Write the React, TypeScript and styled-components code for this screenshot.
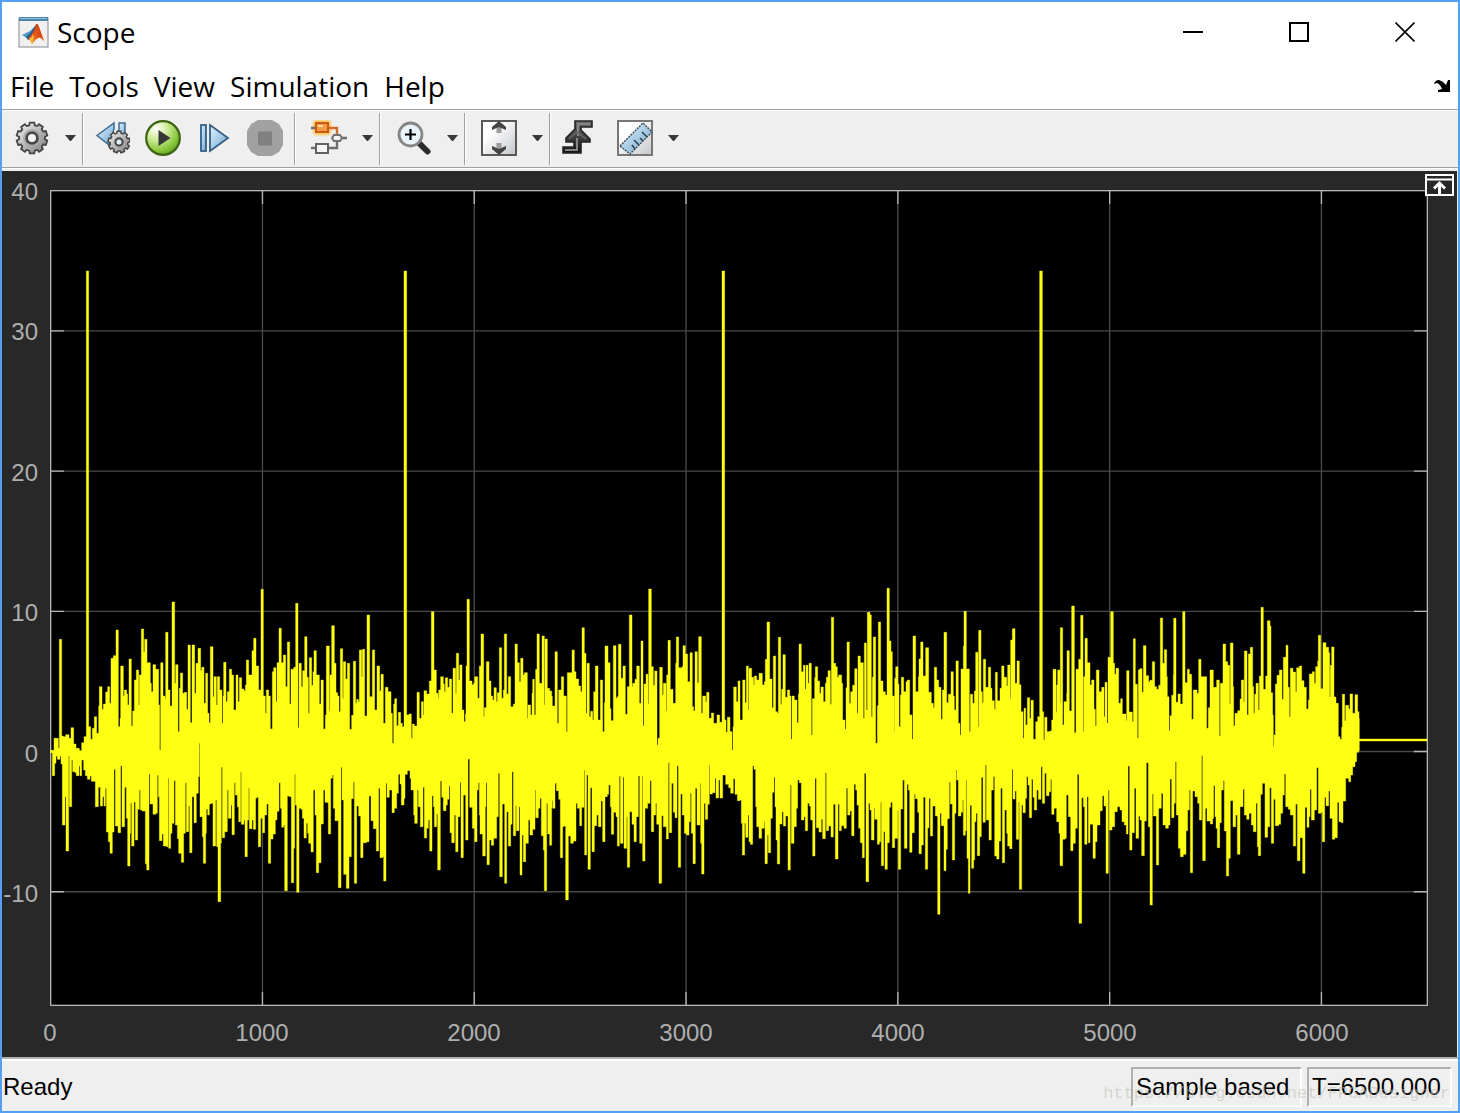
import React from "react";
import styled, { createGlobalStyle } from "styled-components";

const GlobalStyle = createGlobalStyle`
  html, body, #root { height: 100%; }
  body { margin: 0; background: #ffffff; }
  *, *::before, *::after { box-sizing: border-box; }
  button { border: 0; margin: 0; padding: 0; background: transparent; font: inherit; color: inherit; }
`;

const uiFont = `"Open Sans", "Noto Sans", sans-serif`;
const plainFont = `"Liberation Sans", Arial, sans-serif`;

/* ---------- window chrome ---------- */

const Window = styled.div`
  display: flex;
  flex-direction: column;
  min-height: 100%;
  border: 2px solid #53a0f6;
  background: #ffffff;
  color: #000000;
`;

const TitleBar = styled.header`
  display: flex;
  align-items: center;
  height: 60px;
  padding-left: 16px;
  font: 28px/40px ${uiFont};
`;

const Title = styled.h1`
  flex: 1;
  margin: 0 0 0 8px;
  font: inherit;
`;

const WindowButton = styled.button`
  display: flex;
  align-items: center;
  justify-content: center;
  width: 106px;
  height: 60px;
`;

const MenuBar = styled.nav`
  display: flex;
  align-items: center;
  gap: 15px;
  height: 47px;
  padding: 0 8px;
  font: 28px/40px ${uiFont};
`;

const MenuItem = styled.button`
  height: 44px;
`;

const DockButton = styled.button`
  display: flex;
  margin-left: auto;
`;

/* ---------- toolbar ---------- */

const ToolBar = styled.div`
  display: flex;
  height: 59px;
  padding: 3px 0 2px;
  border-top: 1px solid #a0a0a0;
  border-bottom: 1px solid #a0a0a0;
  background: #efefef;
  box-shadow: inset 0 1px 0 #ffffff;
`;

const ToolGroup = styled.div<{ $last?: boolean }>`
  display: flex;
  align-items: center;
  padding: 0 6px 2px 0;
  border-right: ${(p) => (p.$last ? "0" : "1px solid #a0a0a0")};
  box-shadow: ${(p) => (p.$last ? "none" : "1px 0 0 #ffffff")};
  margin-right: 1px;
`;

const ToolButton = styled.button`
  display: flex;
  padding: 0 5px 0 10px;
`;

const SplitButton = styled.div<{ $lead?: boolean }>`
  display: flex;
  align-items: center;
  padding-left: ${(p) => (p.$lead ? 12 : 15)}px;
`;

const PlainButton = styled.button`
  display: flex;
`;

const ArrowButton = styled.button`
  display: flex;
  align-items: center;
  height: 36px;
  padding-left: 15px;
`;

/* ---------- plot ---------- */

const PlotPanel = styled.main`
  position: relative;
  flex: 1;
  display: grid;
  grid-template-columns: 48px 1fr;
  grid-template-rows: 1fr 51px;
  min-height: 400px;
  margin: 3px 1px 0 0;
  padding: 19px 29px 0 0;
  background: #282828;
  box-shadow: 0 -2px 0 #efefef, 1px 0 0 #efefef;
  color: #afafaf;
  font: 24px/28px ${plainFont};
`;

const YAxis = styled.div`
  display: grid;
  grid-template-rows: repeat(5, 100fr) 81fr;
  justify-items: end;
  padding-right: 12px;
`;

const YLabel = styled.span`
  height: 28px;
  margin-top: -12px;
`;

const PlotArea = styled.svg`
  display: block;
  width: 100%;
  height: 100%;
  min-height: 0;
  background: #000000;
`;

const XAxis = styled.div`
  grid-column: 2;
  display: grid;
  grid-template-columns: repeat(6, 2fr) 1fr;
  align-items: center;
  padding-top: 2px;
`;

const XLabel = styled.span`
  display: flex;
  justify-content: center;
  width: 0;
`;

const MaximizeAxes = styled.button`
  position: absolute;
  top: 3px;
  right: 3px;
  display: flex;
`;

/* ---------- status bar ---------- */

const StatusBar = styled.footer`
  position: relative;
  display: flex;
  align-items: center;
  gap: 5px;
  height: 54px;
  padding: 6px 6px 2px 1px;
  border-top: 2px solid #b0b0b0;
  background: #efefef;
  box-shadow: inset 0 2px 0 #ffffff;
  font: 24px/28px ${plainFont};
`;

const StatusText = styled.span`
  flex: 1;
`;

const StatusField = styled.span<{ $width: number }>`
  width: ${(p) => p.$width}px;
  height: 40px;
  padding: 4px 0 0 3px;
  border: 2px solid;
  border-color: #b0b0b0 #ffffff #ffffff #b0b0b0;
  white-space: nowrap;
`;

const Watermark = styled.span`
  position: absolute;
  right: 8px;
  bottom: 5px;
  color: rgba(190, 190, 180, 0.55);
  font: 17px/24px "Liberation Mono", monospace;
  pointer-events: none;
`;

/* ---------- icons ---------- */

function gearPath(cx: number, cy: number, outer: number, inner: number, teeth: number) {
  const step = (Math.PI * 2) / teeth;
  const at = (r: number, a: number) =>
    `${(cx + r * Math.cos(a)).toFixed(2)} ${(cy + r * Math.sin(a)).toFixed(2)}`;
  let d = "";
  for (let i = 0; i < teeth; i++) {
    const a = i * step - Math.PI / 2;
    d += `${i ? "L" : "M"}${at(inner, a - step * 0.34)}L${at(outer, a - step * 0.24)}L${at(outer, a + step * 0.24)}L${at(inner, a + step * 0.34)}`;
  }
  return d + "Z";
}

const IconDefs = () => (
  <svg width="0" height="0" aria-hidden="true" style={{ position: "absolute" }}>
    <defs>
      <linearGradient id="steel" x1="0" y1="0" x2="1" y2="1">
        <stop offset="0" stopColor="#f4f4f4" />
        <stop offset="1" stopColor="#7c7c7c" />
      </linearGradient>
      <linearGradient id="sky" x1="0" y1="0" x2="1" y2="1">
        <stop offset="0" stopColor="#e2f2fb" />
        <stop offset="1" stopColor="#6fa9d2" />
      </linearGradient>
      <radialGradient id="leaf" cx="0.3" cy="0.22" r="0.85">
        <stop offset="0" stopColor="#ffffff" />
        <stop offset="0.4" stopColor="#cdeb94" />
        <stop offset="0.8" stopColor="#84c437" />
        <stop offset="1" stopColor="#5f9c22" />
      </radialGradient>
      <linearGradient id="paper" x1="0" y1="0" x2="1" y2="1">
        <stop offset="0.3" stopColor="#ffffff" />
        <stop offset="1" stopColor="#c2c5ca" />
      </linearGradient>
      <linearGradient id="coal" x1="0" y1="0" x2="0" y2="1">
        <stop offset="0" stopColor="#6e6e6e" />
        <stop offset="1" stopColor="#111111" />
      </linearGradient>
      <linearGradient id="flame" x1="0" y1="0" x2="1" y2="1">
        <stop offset="0" stopColor="#7a1f1c" />
        <stop offset="0.45" stopColor="#e2571b" />
        <stop offset="1" stopColor="#f7b42e" />
      </linearGradient>
      <filter id="glow" x="-40%" y="-40%" width="180%" height="180%">
        <feGaussianBlur stdDeviation="1" />
      </filter>
    </defs>
  </svg>
);

const Icon = ({ children }: { children: React.ReactNode }) => (
  <svg width="36" height="36" viewBox="0 0 36 36" aria-hidden="true">
    {children}
  </svg>
);

const LogoIcon = () => (
  <svg width="31" height="31" viewBox="0 0 31 31" aria-hidden="true">
    <rect x="1" y="1" width="29" height="29" fill="#f0f0f1" stroke="#85888c" />
    <rect x="1" y="0" width="29" height="4" fill="#4d86ad" />
    <rect x="2" y="1" width="27" height="1" fill="#8fc0dd" />
    <path d="M4 18 12 14 18 8 14 20 10 22Z" fill="#4b9ac6" />
    <path d="M8 20 13 15 18 8 14 21 10 23Z" fill="#285a86" />
    <path d="M10 22Q15 17 18 7Q20 6 21 10L26 24Q23 20 20 21Q18 22 14 27Q12 22 10 22Z" fill="url(#flame)" />
    <path d="M19 8Q20 14 18 22L21 20Q24 21 26 24L21 10Q20 7 19 8Z" fill="#dc4a17" />
    <path d="M11 22Q14 20 15 17Q17 22 14 27Q12 23 11 22Z" fill="#f5b636" />
  </svg>
);

const GearIcon = () => (
  <Icon>
    <path d={gearPath(18, 18, 15.5, 13, 10)} fill="url(#steel)" stroke="#454545" strokeWidth="1.8" />
    <circle cx="18" cy="18" r="8" fill="none" stroke="#a9a9a9" strokeWidth="1.6" />
    <circle cx="18" cy="18" r="5.4" fill="#f3f3f3" stroke="#474747" strokeWidth="2.8" />
  </Icon>
);

const StepBackIcon = () => (
  <Icon>
    <path d="M3 15.5 20 3V9L15 25Z" fill="url(#sky)" stroke="#3f6a8f" strokeWidth="1.5" />
    <path d="M25 3H31V16H25Z" fill="url(#sky)" stroke="#3f6a8f" strokeWidth="1.5" />
    <path d={gearPath(25, 22, 11, 9, 9)} fill="url(#steel)" stroke="#454545" strokeWidth="1.5" />
    <circle cx="25" cy="22" r="3.6" fill="#dff0fa" stroke="#4a4a4a" strokeWidth="2.2" />
  </Icon>
);

const RunIcon = () => (
  <Icon>
    <circle cx="18" cy="18" r="16.8" fill="url(#leaf)" stroke="#3d6315" strokeWidth="2.2" />
    <path d="M13.5 10V26L25.5 18Z" fill="#363636" />
  </Icon>
);

const StepIcon = () => (
  <Icon>
    <rect x="5" y="5" width="5" height="26" fill="url(#sky)" stroke="#345f86" strokeWidth="1.8" />
    <path d="M14 5V31L32 18Z" fill="url(#sky)" stroke="#345f86" strokeWidth="1.8" />
  </Icon>
);

const StopIcon = () => (
  <Icon>
    <path d="M11 0H25L32 4 36 11V25L32 32 25 36H11L4 32 0 25V11L4 4Z" fill="#a1a1a1" />
    <rect x="11" y="11.5" width="14" height="14" fill="#808080" />
  </Icon>
);

const HighlightIcon = () => (
  <Icon>
    <rect x="2" y="0" width="18" height="15" rx="4" fill="#ffc24d" filter="url(#glow)" />
    <path d="M0 8H4M0 28H5M17 28H26V21M31 18H36" fill="none" stroke="#6e6e6e" strokeWidth="2.4" />
    <path d="M17 8H26V14" fill="none" stroke="#cf6c2a" strokeWidth="2.4" />
    <rect x="5" y="3" width="12" height="9" fill="#f39a45" stroke="#c85a17" strokeWidth="2" />
    <path d="M7 5H12V7H7Z" fill="#ffd9a3" />
    <rect x="5" y="24" width="12" height="9" fill="#f4f4f4" stroke="#626262" strokeWidth="2" />
    <path d="M21 18 23 15H29L31 18 29 21H23Z" fill="#f1f1f1" stroke="#707070" strokeWidth="2" />
  </Icon>
);

const ZoomInIcon = () => (
  <Icon>
    <path d="M23 23 31.5 31.5" stroke="#2c2c2c" strokeWidth="6" strokeLinecap="round" />
    <circle cx="14.5" cy="14.5" r="11.5" fill="#e9f3fa" stroke="#858585" strokeWidth="2.8" />
    <path d="M14.500 9V20M9 14.500H20" stroke="#000000" strokeWidth="2.2" />
  </Icon>
);

const FitIcon = () => (
  <Icon>
    <rect x="1" y="1" width="34" height="34" fill="url(#paper)" stroke="#585858" strokeWidth="2" />
    <path d="M18 6V13M18 23V30" stroke="#9a9a9a" strokeWidth="5" />
    <path d="M18 1 25 7V10L18 7 11 10V7Z" fill="#444444" />
    <path d="M18 35 25 29V26L18 29 11 26V29Z" fill="#444444" />
  </Icon>
);

const TriggerIcon = () => (
  <Icon>
    <path
      d="M14 1H31V7H20V10L29 19V22H20V33H2V27H13V22H5V18L14 9Z"
      fill="url(#coal)"
      stroke="#242424"
      strokeWidth="1.6"
    />
    <path d="M4 30H16V18M17 16V4H29" fill="none" stroke="#858585" strokeWidth="2" />
    <path d="M8 19 16 12 25 19" fill="none" stroke="#666666" strokeWidth="1.6" />
  </Icon>
);

const MeasureIcon = () => (
  <Icon>
    <rect x="1" y="1" width="34" height="34" fill="url(#paper)" stroke="#777777" strokeWidth="2" />
    <path d="M3 26 26 3 35 12 13 34Z" fill="url(#sky)" stroke="#42555f" strokeWidth="1.5" strokeDasharray="2 1" />
    <path d="M18 29 15 25M22 25 17 20M26 21 23 18M30 17 25 12" stroke="#33424c" strokeWidth="1.6" />
  </Icon>
);

const ArrowIcon = () => (
  <svg width="11" height="6" viewBox="0 0 11 6" aria-hidden="true">
    <path d="M0 0H11L6 6H5Z" fill="#383838" />
  </svg>
);

const Split = ({
  name,
  lead,
  children,
}: {
  name: string;
  lead?: boolean;
  children: React.ReactNode;
}) => (
  <SplitButton $lead={lead}>
    <PlainButton aria-label={name}>{children}</PlainButton>
    <ArrowButton aria-label={`${name} options`}>
      <ArrowIcon />
    </ArrowButton>
  </SplitButton>
);

/* ---------- signal ---------- */

// The signal is kept as an upper and a lower outline: "x y" steps, each level
// holding until the next x. Units are thirds of a plot pixel; every block is
// relative to its own x origin.
const BLOCKS = [
  {
    x: -30,
    top: "31 571,42 535,55 565,58 238,65 528,70 530,77 524,87 535,93 503,101 552,108 565,118 572,125 548,132 530,139 -867,146 500,152 538,157 505,163 470,170 520,176 438,178 380,186 448,190 432,197 396,203 380,209 430,213 295,220 287,228 210,235 500,240 475,242 318,250 408,253 390,260 402,263 435,267 297,274 498,278 453,283 360,289 330,296 435,298 345,304 207,311 275,314 238,321 308,331 370,334 395,339 314,347 328,356 435,359 570,362 308,369 408,375 416,377 217,384 390,390 438,396 126,404 370,407 314,414 515,418 385,421 339,428 400,433 397,440 448,444 255,451 488,456 255,464 400,468 310,474 265,482 332,485 322,492 430,497 340,503 460,507 488,511 260,519 410,522 350,529 435,532 350,539 390,546 490,549 408,551 307,558 425,562 395,568 328,575 345,581 450,588 345,594 425,598 353,605 387,612 393,616 375,619 300,626 345,636 272,641 235,648 318,656 390,663 88,670 408,676 460,679 390,686 408,691 507,697 335,701 323,708 425,711 308,717 205,724 308,730 285,737 380,742 246,749 432,753 328,761 322,767 130,774 503,777 310,784 380,788 332,794 230,801 352,805 460,808 293,815 376,819 335,822 272,829 345,838 432,843 360,850 507,856 465,859 258,868 452,870 345,875 197,883 310,888 398,893 408,897 455,901 266,908 415,910 305,917 357,922 310,929 508,935 466,940 304,947 430,950 418,955 425,958 270,965 350,967 268,974 468,981 165,989 410,997 270,1004 450,1011 318,1019 393,1023 343,1030 490,1036 382,1044 395",
    bottom:
      "31 578,37 647,44 610,48 588,52 598,60 588,63 612,67 795,75 710,78 873,86 588,88 740,95 600,98 635,105 638,109 647,117 618,120 647,125 600,131 630,136 647,142 658,150 648,154 664,166 740,175 682,181 738,188 710,192 738,196 685,199 816,205 845,210 880,217 816,222 628,226 798,234 818,242 617,246 800,254 682,259 775,263 918,270 820,272 730,275 858,282 726,286 840,293 748,298 690,301 750,306 753,316 911,320 930,327 642,330 732,339 763,347 760,352 646,355 710,358 842,366 822,370 858,380 860,384 655,386 865,392 820,396 790,402 662,406 795,412 836,416 880,424 907,431 820,436 668,439 815,446 738,449 878,456 710,462 788,469 700,475 650,478 550,480 770,487 830,490 910,497 820,499 748,503 765,508 732,513 730,519 858,527 720,530 860,534 1025,542 850,544 622,547 833,554 815,562 690,565 775,573 735,576 824,583 668,586 705,592 740,596 785,602 637,604 793,612 780,615 890,622 780,626 684,628 806,636 780,640 808,647 715,650 712,655 860,662 775,668 818,674 765,680 732,685 910,692 837,699 822,706 780,711 754,717 668,721 745,725 802,731 795,734 992,742 708,748 710,754 968,761 865,764 643,766 735,770 997,777 745,783 748,787 775,792 834,799 790,803 820,806 850,813 876,820 690,825 765,829 938,836 908,843 792,850 690,855 727,862 728,865 822,872 655,877 645,880 745,885 782,895 983,903 622,906 720,911 943,919 985,927 890,934 716,940 666,943 970,950 738,956 768,962 893,969 848,980 845,987 708,993 782,1000 806,1009 873,1016 685,1020 893,1028 890,1031 963,1038 670,1041 712,1048 690",
  },
  {
    x: 1020,
    top: "0 395,3 460,7 550,11 432,14 416,20 497,25 457,32 490,37 500,42 -867,50 465,57 462,64 535,67 492,73 498,81 397,88 475,94 425,100 465,102 392,110 402,118 363,124 155,132 330,139 400,144 415,146 390,152 350,160 372,163 395,166 353,173 382,178 357,185 460,189 325,197 400,199 280,206 360,209 315,216 450,222 485,226 462,228 318,231 118,238 363,246 374,251 370,254 350,263 415,268 318,273 222,281 470,283 443,289 305,297 363,303 408,308 420,312 383,319 425,322 398,328 263,335 415,340 390,343 222,350 402,355 350,362 440,370 432,375 252,382 308,388 365,392 295,399 345,403 338,412 475,414 435,422 465,426 400,428 358,433 465,437 328,441 222,448 370,456 228,463 435,465 237,472 385,479 393,485 408,487 438,495 275,502 490,506 390,514 350,521 408,529 515,532 338,546 270,553 335,558 357,566 378,572 395,576 203,583 280,588 460,591 310,598 470,602 454,608 480,611 395,616 318,624 480,631 360,638 515,643 428,645 258,654 308,660 446,663 482,670 257,678 415,681 410,685 253,693 355,699 318,706 463,712 380,718 165,726 380,728 370,735 358,740 318,748 430,753 243,759 497,762 372,768 343,774 432,776 87,784 320,790 376,794 333,801 555,804 535,809 322,817 405,820 370,828 453,830 345,834 241,841 388,849 430,857 310,859 231,866 323,876 320,879 257,886 282,893 365,900 278,907 440,911 453,915 275,922 368,926 230,934 460,938 408,947 425,950 397,957 475,964 459,971 490,981 465,989 487,996 -867,1004 480,1008 517,1012 472,1020 515,1026 570,1029 500,1031 381,1039 425,1044 363",
    bottom:
      "0 690,6 758,13 745,20 700,25 643,30 672,34 735,42 715,45 643,52 632,60 655,63 690,71 765,74 790,82 690,85 740,91 800,99 682,103 834,110 805,115 780,119 873,126 707,130 740,133 800,140 762,143 930,151 663,155 712,160 752,168 735,172 718,177 677,180 818,185 848,193 765,197 875,204 770,210 667,213 893,220 705,227 840,234 597,239 742,247 805,254 845,261 690,265 668,268 765,270 822,278 888,286 740,288 668,291 914,298 840,304 856,311 835,320 770,325 640,329 950,337 732,344 970,350 755,355 858,362 793,366 635,370 827,377 737,379 812,387 740,390 945,396 825,400 905,407 850,415 780,420 825,428 808,435 690,437 773,445 745,450 715,454 827,460 870,463 992,470 730,473 822,479 856,485 745,487 722,489 745,495 670,499 692,506 718,511 893,518 800,522 798,527 1020,535 828,542 850,550 843,558 730,562 745,569 797,575 742,582 630,584 885,590 645,594 928,601 683,606 875,613 797,620 765,625 800,633 723,638 845,645 710,652 703,656 675,661 740,664 823,671 757,678 770,682 858,688 648,691 850,699 652,702 865,710 770,712 922,719 755,726 793,732 845,739 770,745 648,749 850,756 648,758 903,765 745,773 730,780 662,784 815,791 765,797 730,800 793,807 970,815 767,820 800,829 837,835 608,838 818,845 670,850 757,855 773,861 617,865 922,872 702,877 765,883 820,889 825,897 785,901 700,904 820,909 911,916 685,921 795,930 670,932 850,935 942,942 730,946 778,953 733,958 615,960 702,967 698,975 655,978 714,986 660,990 714,998 645,1007 673,1016 683,1022 700,1030 656,1035 703,1042 722",
  },
  {
    x: 2070,
    top: "0 480,8 360,15 428,19 318,25 450,27 325,35 352,41 375,43 348,50 360,57 340,67 375,73 365,76 298,81 186,89 357,96 443,100 288,107 455,112 460,115 232,122 433,125 388,129 284,136 412,142 390,149 408,153 538,156 408,163 420,171 488,175 402,177 252,184 335,190 316,195 388,198 316,204 370,207 310,214 525,217 416,224 353,226 320,233 363,239 400,243 381,250 425,256 370,259 352,264 332,271 433,274 172,281 310,287 320,292 352,296 345,305 370,308 480,315 508,318 383,321 246,328 430,332 395,338 376,344 326,351 460,354 288,361 308,370 475,373 249,379 450,382 157,390 165,394 470,397 352,400 231,407 550,412 437,415 186,422 363,429 395,436 405,441 85,448 243,453 275,457 408,463 515,464 355,467 320,474 373,477 500,481 405,484 352,491 395,498 365,502 360,509 465,516 538,519 228,527 395,535 350,537 297,542 246,549 348,557 263,566 397,574 430,580 443,583 322,590 360,596 382,603 478,607 390,612 217,620 428,625 403,633 335,640 408,643 450,648 303,655 490,660 525,663 327,670 258,672 154,679 327,688 515,691 403,698 430,703 393,707 277,714 500,716 211,723 395,727 428,730 298,737 382,745 322,752 385,756 422,763 448,766 337,772 422,780 385,785 318,792 352,800 378,803 315,810 415,812 240,817 206,825 370,831 303,838 374,843 455,849 535,852 445,857 495,862 413,869 475,873 421,880 538,887 485,893 470,899 -867,907 455,911 540,914 472,921 515,929 513,935 480,939 328,948 457,950 375,953 330,960 430,961 203,968 495,972 425,980 400,981 272,988 453,995 138,1003 518,1008 328,1016 298,1022 166,1029 515,1031 350,1035 235,1042 308",
    bottom:
      "0 720,4 790,7 885,14 790,17 832,24 765,27 845,31 853,38 617,42 628,47 740,50 800,57 835,65 805,73 785,75 911,82 825,85 878,92 775,97 697,102 652,105 740,108 840,112 912,119 792,126 755,130 798,137 768,144 930,151 675,154 850,162 800,169 745,173 660,178 668,184 780,192 770,196 812,203 730,208 738,212 780,218 888,225 655,229 803,237 816,244 778,248 836,256 638,259 812,266 798,273 831,280 733,286 897,294 733,298 812,304 797,312 805,319 685,323 765,330 753,335 827,342 673,347 690,351 735,356 805,361 848,367 893,373 640,378 965,386 730,390 750,394 840,402 745,404 778,412 853,418 845,422 727,424 917,431 815,435 928,442 848,448 742,452 727,457 863,464 835,473 752,475 928,482 747,488 660,493 865,501 673,505 690,509 877,516 818,523 703,526 716,533 757,537 881,544 855,550 712,556 928,563 803,567 715,571 828,578 738,586 768,593 1063,600 760,604 797,612 932,618 868,622 776,628 666,631 732,637 900,644 760,648 630,650 660,655 768,663 757,668 720,670 826,676 812,679 660,681 895,685 1000,690 736,695 925,701 900,704 785,708 760,712 887,719 830,724 652,729 787,736 615,739 780,747 840,754 690,760 650,764 888,770 897,777 843,782 685,787 908,794 750,800 820,803 858,809 866,816 628,819 717,825 693,829 838,836 727,838 988,845 735,849 758,856 715,860 650,864 675,868 773,875 658,879 712,883 750,890 690,895 718,903 620,907 730,914 640,919 707,927 695,932 658,935 763,942 745,950 785,957 820,960 917,968 838,975 835,979 705,985 770,992 872,999 850,1006 805,1012 643,1017 1090,1025 713,1030 740,1034 853,1041 710,1045 848",
  },
  {
    x: 3120,
    top: "0 375,5 360,12 448,16 498,19 330,27 395,35 382,42 470,45 367,51 490,54 292,62 155,70 310,74 343,78 325,86 430,92 416,97 462,108 482,110 332,117 456,127 485,130 236,136 373,142 535,145 330,149 326,156 397,160 257,168 347,176 365,180 361,187 305,194 380,200 388,206 376,211 174,218 310,223 269,230 350,232 410,237 512,240 467,245 406,250 345,251 175,258 427,264 402,271 432,278 155,285 368,292 328,298 343,305 478,310 390,321 400,326 298,333 350,345 350,350 505,355 443,360 330,370 382,380 360,388 528,391 370,399 252,407 305,413 316,419 432,421 249,429 380,431 497,435 460,443 452,450 417,454 360,461 427,463 273,471 465,475 282,481 262,488 380,491 460,494 403,498 370,505 450,508 348,513 142,520 388,527 348,532 182,540 198,543 398,548 465,550 560,552 525,556 372,561 346,568 330,576 418,580 292,588 256,594 382,598 470,601 325,609 336,617 395,620 323,628 318,635 362,642 382,649 447,655 420,658 342,667 335,673 370,677 320,683 303,685 226,692 386,699 248,708 262,716 278,719 410,721 316,725 261,732 411,738 430,745 530,750 538,755 502,757 403,764 482,767 436,776 447,780 402,788 460,795 404,803 455,807 475,808 537",
    bottom:
      "0 793,9 895,16 845,21 795,30 752,37 707,42 738,48 940,55 690,58 810,66 800,74 755,82 740,90 750,96 785,103 795,109 822,114 618,119 870,126 818,133 685,138 835,146 768,150 780,155 887,163 783,169 608,175 800,180 1035,187 702,190 768,199 915,206 745,214 700,219 795,227 805,235 795,240 657,245 773,252 730,256 605,259 765,265 865,271 890,280 883,288 812,293 750,298 690,301 938,308 693,315 710,323 730,328 780,335 587,338 902,346 745,351 783,361 792,368 775,371 677,375 770,378 805,382 863,389 788,394 690,400 662,403 813,409 948,416 895,421 722,429 800,437 765,442 883,450 740,459 688,463 765,470 778,477 760,484 795,490 815,498 730,502 860,505 887,512 703,517 670,525 832,533 800,539 683,544 850,551 718,556 797,566 793,572 760,578 705,583 642,587 740,595 748,601 765,610 858,617 732,622 902,630 833,638 940,645 742,651 802,657 770,660 688,664 780,673 750,680 623,685 760,693 757,697 845,704 712,708 737,716 693,720 775,727 838,734 833,742 727,747 785,754 788,759 723,767 655,776 665,782 645,788 620,795 605,800 577,806 572,808 543",
  },
];

const VIEW_W = 4134;
const VIEW_H = 2448;
const SIGNAL_END = 4131;
const SIGNAL_Y = 1110;

function outline(side: "top" | "bottom") {
  const steps = BLOCKS.flatMap((b) =>
    b[side].split(",").map((pair) => {
      const [x, y] = pair.split(" ").map(Number);
      return [x + b.x, y + SIGNAL_Y];
    }),
  );
  return steps.flatMap(([x, y], i) => [
    [x, y],
    [i + 1 < steps.length ? steps[i + 1][0] : SIGNAL_END, y],
  ]);
}

const SIGNAL_PATH =
  "M" + [...outline("top"), ...outline("bottom").reverse()].map((p) => p.join(" ")).join("L") + "Z";

const X_TICKS = [0, 1000, 2000, 3000, 4000, 5000, 6000];
const Y_TICKS = [40, 30, 20, 10, 0, -10];
const xAt = (v: number) => 2 + (v / 6500) * (VIEW_W - 4);
const yAt = (v: number) => 2 + ((40 - v) / 58.1) * (VIEW_H - 4);

const Scope = () => (
  <PlotArea viewBox={`0 0 ${VIEW_W} ${VIEW_H}`} preserveAspectRatio="none" role="img" aria-label="Scope signal">
    <g stroke="#4a4a4a" strokeWidth="4">
      {X_TICKS.slice(1).map((v) => (
        <path key={v} d={`M${xAt(v)} 0V${VIEW_H}`} />
      ))}
      {Y_TICKS.slice(1).map((v) => (
        <path key={v} d={`M0 ${yAt(v)}H${VIEW_W}`} />
      ))}
    </g>
    <g stroke="#b4b4b4" strokeWidth="4">
      {X_TICKS.slice(1).map((v) => (
        <path key={v} d={`M${xAt(v)} 0V42M${xAt(v)} ${VIEW_H}V${VIEW_H - 42}`} />
      ))}
      {Y_TICKS.slice(1).map((v) => (
        <path key={v} d={`M0 ${yAt(v)}H42M${VIEW_W} ${yAt(v)}H${VIEW_W - 42}`} />
      ))}
      <rect x="2" y="2" width={VIEW_W - 4} height={VIEW_H - 4} fill="none" />
    </g>
    <path d={SIGNAL_PATH} fill="#ffff13" stroke="#ffff13" strokeWidth="3" strokeOpacity="0.4" />
  </PlotArea>
);

export default function App() {
  return (
    <Window>
      <GlobalStyle />
      <IconDefs />
      <TitleBar>
        <LogoIcon />
        <Title>Scope</Title>
        <WindowButton aria-label="Minimize">
          <svg width="20" height="20" viewBox="0 0 20 20">
            <path d="M0 10H20" stroke="#000000" strokeWidth="2" />
          </svg>
        </WindowButton>
        <WindowButton aria-label="Maximize">
          <svg width="20" height="20" viewBox="0 0 20 20">
            <rect x="1" y="1" width="18" height="18" fill="none" stroke="#000000" strokeWidth="2" />
          </svg>
        </WindowButton>
        <WindowButton aria-label="Close">
          <svg width="20" height="20" viewBox="0 0 20 20">
            <path d="M0.5 0.5 19.5 19.5M19.5 0.5 0.5 19.5" stroke="#000000" strokeWidth="1.6" />
          </svg>
        </WindowButton>
      </TitleBar>

      <MenuBar>
        {["File", "Tools", "View", "Simulation", "Help"].map((name) => (
          <MenuItem key={name}>{name}</MenuItem>
        ))}
        <DockButton aria-label="Dock">
          <svg width="16" height="12" viewBox="0 0 16 12">
            <path d="M0 4Q1 0 5 0Q9 1 12 5L14 0H16V12H4V10L8 9Q6 4 3 3Z" fill="#000000" />
          </svg>
        </DockButton>
      </MenuBar>

      <ToolBar role="toolbar" aria-label="Scope">
        <ToolGroup>
          <Split name="Configuration" lead>
            <GearIcon />
          </Split>
        </ToolGroup>
        <ToolGroup>
          <ToolButton aria-label="Stepping options">
            <StepBackIcon />
          </ToolButton>
          <ToolButton aria-label="Run">
            <RunIcon />
          </ToolButton>
          <ToolButton aria-label="Step forward">
            <StepIcon />
          </ToolButton>
          <ToolButton aria-label="Stop" disabled>
            <StopIcon />
          </ToolButton>
        </ToolGroup>
        <ToolGroup>
          <Split name="Highlight block">
            <HighlightIcon />
          </Split>
        </ToolGroup>
        <ToolGroup>
          <Split name="Zoom">
            <ZoomInIcon />
          </Split>
        </ToolGroup>
        <ToolGroup>
          <Split name="Scale axes">
            <FitIcon />
          </Split>
        </ToolGroup>
        <ToolGroup $last>
          <ToolButton aria-label="Triggers">
            <TriggerIcon />
          </ToolButton>
          <Split name="Cursor measurements">
            <MeasureIcon />
          </Split>
        </ToolGroup>
      </ToolBar>

      <PlotPanel>
        <YAxis>
          {Y_TICKS.map((v) => (
            <YLabel key={v}>{v}</YLabel>
          ))}
        </YAxis>
        <Scope />
        <XAxis>
          {X_TICKS.map((v) => (
            <XLabel key={v}>{v}</XLabel>
          ))}
        </XAxis>
        <MaximizeAxes aria-label="Maximize axes">
          <svg width="29" height="22" viewBox="0 0 29 22">
            <rect x="1" y="1" width="27" height="20" fill="#282828" stroke="#ffffff" strokeWidth="2" />
            <path d="M2 5.5H27" stroke="#ffffff" strokeWidth="2" />
            <path d="M14.5 20V10M9 14.5 14.5 9 20 14.5" fill="none" stroke="#ffffff" strokeWidth="3" />
          </svg>
        </MaximizeAxes>
      </PlotPanel>

      <StatusBar>
        <StatusText>Ready</StatusText>
        <StatusField $width={171}>Sample based</StatusField>
        <StatusField $width={145}>T=6500.000</StatusField>
        <Watermark>https://blog.csdn.net/FPGADesigner</Watermark>
      </StatusBar>
    </Window>
  );
}
